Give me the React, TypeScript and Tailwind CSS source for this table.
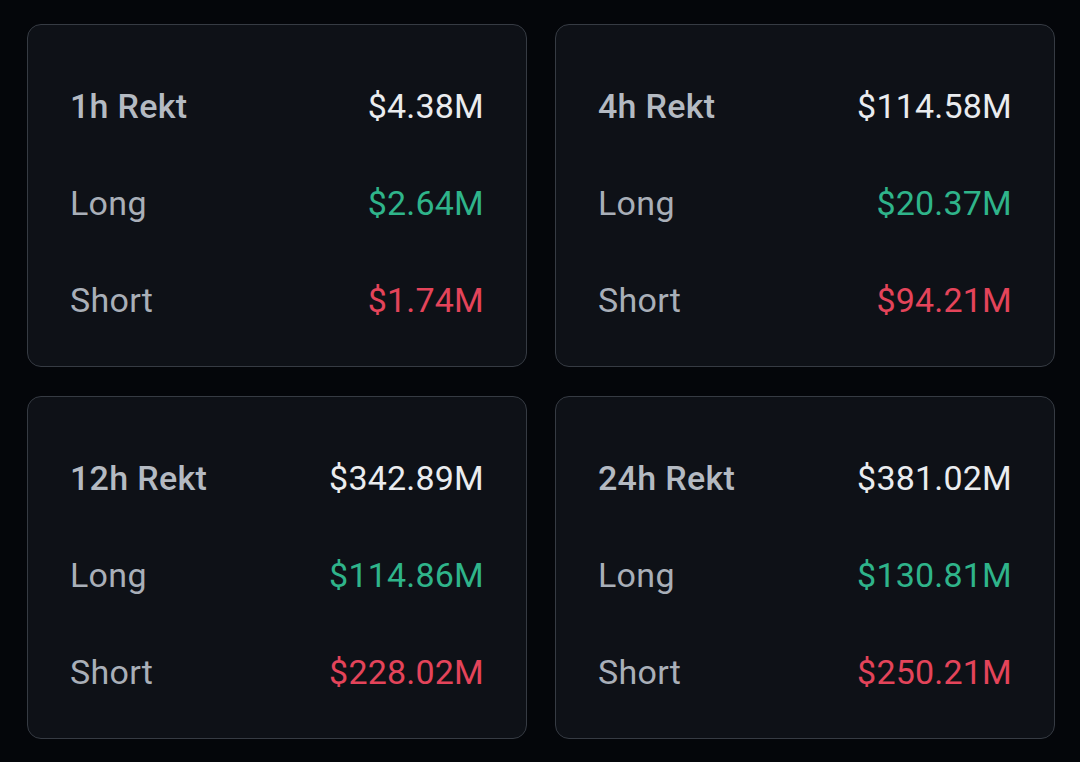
const cards = [
  { title: '1h Rekt', total: '$4.38M', long: '$2.64M', short: '$1.74M' },
  { title: '4h Rekt', total: '$114.58M', long: '$20.37M', short: '$94.21M' },
  { title: '12h Rekt', total: '$342.89M', long: '$114.86M', short: '$228.02M' },
  { title: '24h Rekt', total: '$381.02M', long: '$130.81M', short: '$250.21M' },
]

const App = () => {
  return (
    <div
      className="min-h-[762px] w-[1080px] bg-[#04060a] pl-[27px] pt-[24px]"
      style={{ fontFamily: 'Roboto, "Noto Sans", sans-serif' }}
    >
      <div className="grid grid-cols-[500px_500px] gap-x-[28px] gap-y-[29px]">
        {cards.map((card) => (
          <div
            key={card.title}
            className="flex h-[343px] flex-col gap-[57px] rounded-[14px] border border-[#363b43] bg-[#0e1117] px-[42px] pt-[61px] text-[34px] leading-[40px]"
          >
            <div className="flex items-center justify-between">
              <span className="font-medium tracking-[0.3px] text-[#b4bac2]">{card.title}</span>
              <span className="tracking-[0.2px] text-[#eaecef]">{card.total}</span>
            </div>
            <div className="flex items-center justify-between">
              <span className="tracking-[0.3px] text-[#a9afb8]">Long</span>
              <span className="tracking-[0.2px] text-[#2fb48a]">{card.long}</span>
            </div>
            <div className="flex items-center justify-between">
              <span className="tracking-[0.3px] text-[#a9afb8]">Short</span>
              <span className="tracking-[0.2px] text-[#e4445a]">{card.short}</span>
            </div>
          </div>
        ))}
      </div>
    </div>
  )
}

export default App
